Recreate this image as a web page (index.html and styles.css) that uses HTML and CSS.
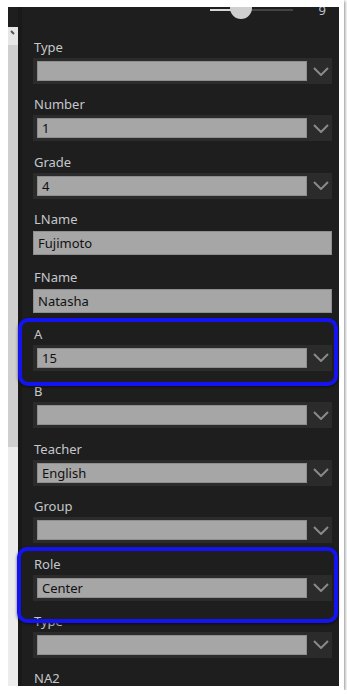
FILE: index.html
```html
<!DOCTYPE html>
<html lang="en">
<head>
    <meta charset="UTF-8">
    <meta name="viewport" content="width=device-width, initial-scale=1.0">
    <title>Student form</title>
    <link rel="stylesheet" href="styles.css">
</head>
<body>
    <div class="card">
        <div class="shot">
            <div class="scrollbar">
                <div class="sb-top"></div>
                <div class="sb-arrow">
                    <svg width="10" height="10" viewBox="0 0 10 10"><path d="M3 4 L6 7" stroke="#555" stroke-width="2"/></svg>
                </div>
                <div class="sb-thumb"></div>
                <div class="sb-track"></div>
            </div>

            <div class="main">
                <div class="topbar">
                    <div class="track">
                        <div class="knob"></div>
                    </div>
                    <span class="val">9</span>
                </div>

                <div class="field">
                    <label>Type</label>
                    <div class="select"><div class="select-box"></div><svg class="chev" width="16" height="9" viewBox="0 0 16 9"><path d="M1 1 L8 8 L15 1" fill="none" stroke="#8a8a8a" stroke-width="2"/></svg></div>
                </div>
                <div class="field">
                    <label>Number</label>
                    <div class="select"><div class="select-box">1</div><svg class="chev" width="16" height="9" viewBox="0 0 16 9"><path d="M1 1 L8 8 L15 1" fill="none" stroke="#8a8a8a" stroke-width="2"/></svg></div>
                </div>
                <div class="field">
                    <label>Grade</label>
                    <div class="select"><div class="select-box">4</div><svg class="chev" width="16" height="9" viewBox="0 0 16 9"><path d="M1 1 L8 8 L15 1" fill="none" stroke="#8a8a8a" stroke-width="2"/></svg></div>
                </div>
                <div class="field">
                    <label>LName</label>
                    <div class="text">Fujimoto</div>
                </div>
                <div class="field">
                    <label>FName</label>
                    <div class="text">Natasha</div>
                </div>
                <div class="field">
                    <label>A</label>
                    <div class="select"><div class="select-box">15</div><svg class="chev" width="16" height="9" viewBox="0 0 16 9"><path d="M1 1 L8 8 L15 1" fill="none" stroke="#8a8a8a" stroke-width="2"/></svg></div>
                </div>
                <div class="field">
                    <label>B</label>
                    <div class="select"><div class="select-box"></div><svg class="chev" width="16" height="9" viewBox="0 0 16 9"><path d="M1 1 L8 8 L15 1" fill="none" stroke="#8a8a8a" stroke-width="2"/></svg></div>
                </div>
                <div class="field">
                    <label>Teacher</label>
                    <div class="select"><div class="select-box">English</div><svg class="chev" width="16" height="9" viewBox="0 0 16 9"><path d="M1 1 L8 8 L15 1" fill="none" stroke="#8a8a8a" stroke-width="2"/></svg></div>
                </div>
                <div class="field">
                    <label>Group</label>
                    <div class="select"><div class="select-box"></div><svg class="chev" width="16" height="9" viewBox="0 0 16 9"><path d="M1 1 L8 8 L15 1" fill="none" stroke="#8a8a8a" stroke-width="2"/></svg></div>
                </div>
                <div class="field">
                    <label>Role</label>
                    <div class="select"><div class="select-box">Center</div><svg class="chev" width="16" height="9" viewBox="0 0 16 9"><path d="M1 1 L8 8 L15 1" fill="none" stroke="#8a8a8a" stroke-width="2"/></svg></div>
                </div>
                <div class="field">
                    <label>Type</label>
                    <div class="select"><div class="select-box"></div><svg class="chev" width="16" height="9" viewBox="0 0 16 9"><path d="M1 1 L8 8 L15 1" fill="none" stroke="#8a8a8a" stroke-width="2"/></svg></div>
                </div>
                <div class="field">
                    <label>NA2</label>
                </div>
            </div>
        </div>

        <!-- annotation boxes drawn over the screenshot -->
        <div class="mark mark-a"></div>
        <div class="mark mark-role"></div>
    </div>
</body>
</html>
```

FILE: styles.css
```css
body {
    margin: 0;
    background: #fff;
    font-family: "Noto Sans", "DejaVu Sans", sans-serif;
}
.card {
    position: relative;
    width: 331px;
    height: 679px;
    padding: 7px 5px 4px 8px;
    background: #fff;
    box-shadow: 1px 1px 3px rgba(0,0,0,0.45);
}
.shot {
    display: flex;
    height: 679px;
    overflow: hidden;
    background: #1e1e1e;
}
.scrollbar {
    width: 10px;
    display: flex;
    flex-direction: column;
}
.sb-top {
    height: 20px;
    background: #1e1e1e;
}
.sb-arrow {
    height: 18px;
    background: #e6e6e6;
}
.sb-arrow svg {
    display: block;
}
.sb-thumb {
    height: 402px;
    background: #cfcfcf;
}
.sb-track {
    flex: 1;
    background: #ececec;
}
.main {
    flex: 1;
    padding: 0 7px 0 15px;
    background: #1e1e1e;
    box-shadow: inset 4px 0 0 #191919;
}
.topbar {
    height: 30px;
    display: flex;
    justify-content: flex-end;
    align-items: flex-start;
    padding-right: 6px;
}
.track {
    position: relative;
    width: 83px;
    height: 2px;
    margin-top: 2px;
    margin-right: 26px;
    background: linear-gradient(to right, #d8d8d8 0 38%, #444 38% 100%);
}
.knob {
    position: absolute;
    left: 20px;
    top: -12px;
    width: 22px;
    height: 22px;
    border-radius: 50%;
    background: #cfcfcf;
}
.val {
    color: #b8c4d0;
    font-size: 13px;
    line-height: 13px;
    margin-top: -3px;
}
.field {
    height: 57.4px;
}
.field label {
    display: block;
    height: 21px;
    line-height: 21px;
    padding-left: 1px;
    color: #c4c8cc;
    font-size: 13px;
}
.select {
    display: flex;
    align-items: center;
    height: 26px;
    padding-left: 4px;
    background: #2b2b2b;
}
.select-box {
    width: 264px;
    height: 18px;
    line-height: 18px;
    padding-left: 4px;
    background: #a6a6a6;
    border: 1px solid #8e8e8e;
    color: #111;
    font-size: 13px;
}
.chev {
    margin-left: 6px;
}
.text {
    height: 22px;
    line-height: 22px;
    margin-top: 1px;
    padding-left: 4px;
    background: #a6a6a6;
    border: 1px solid #8e8e8e;
    color: #111;
    font-size: 13px;
}
.mark {
    position: absolute;
    border: 4px solid #1414f0;
    border-radius: 10px;
    box-shadow: 0 1px 3px rgba(0,0,0,0.6);
}
.mark-a {
    left: 18px;
    top: 318px;
    width: 312px;
    height: 60px;
}
.mark-role {
    left: 17px;
    top: 547px;
    width: 313px;
    height: 68px;
}
```
